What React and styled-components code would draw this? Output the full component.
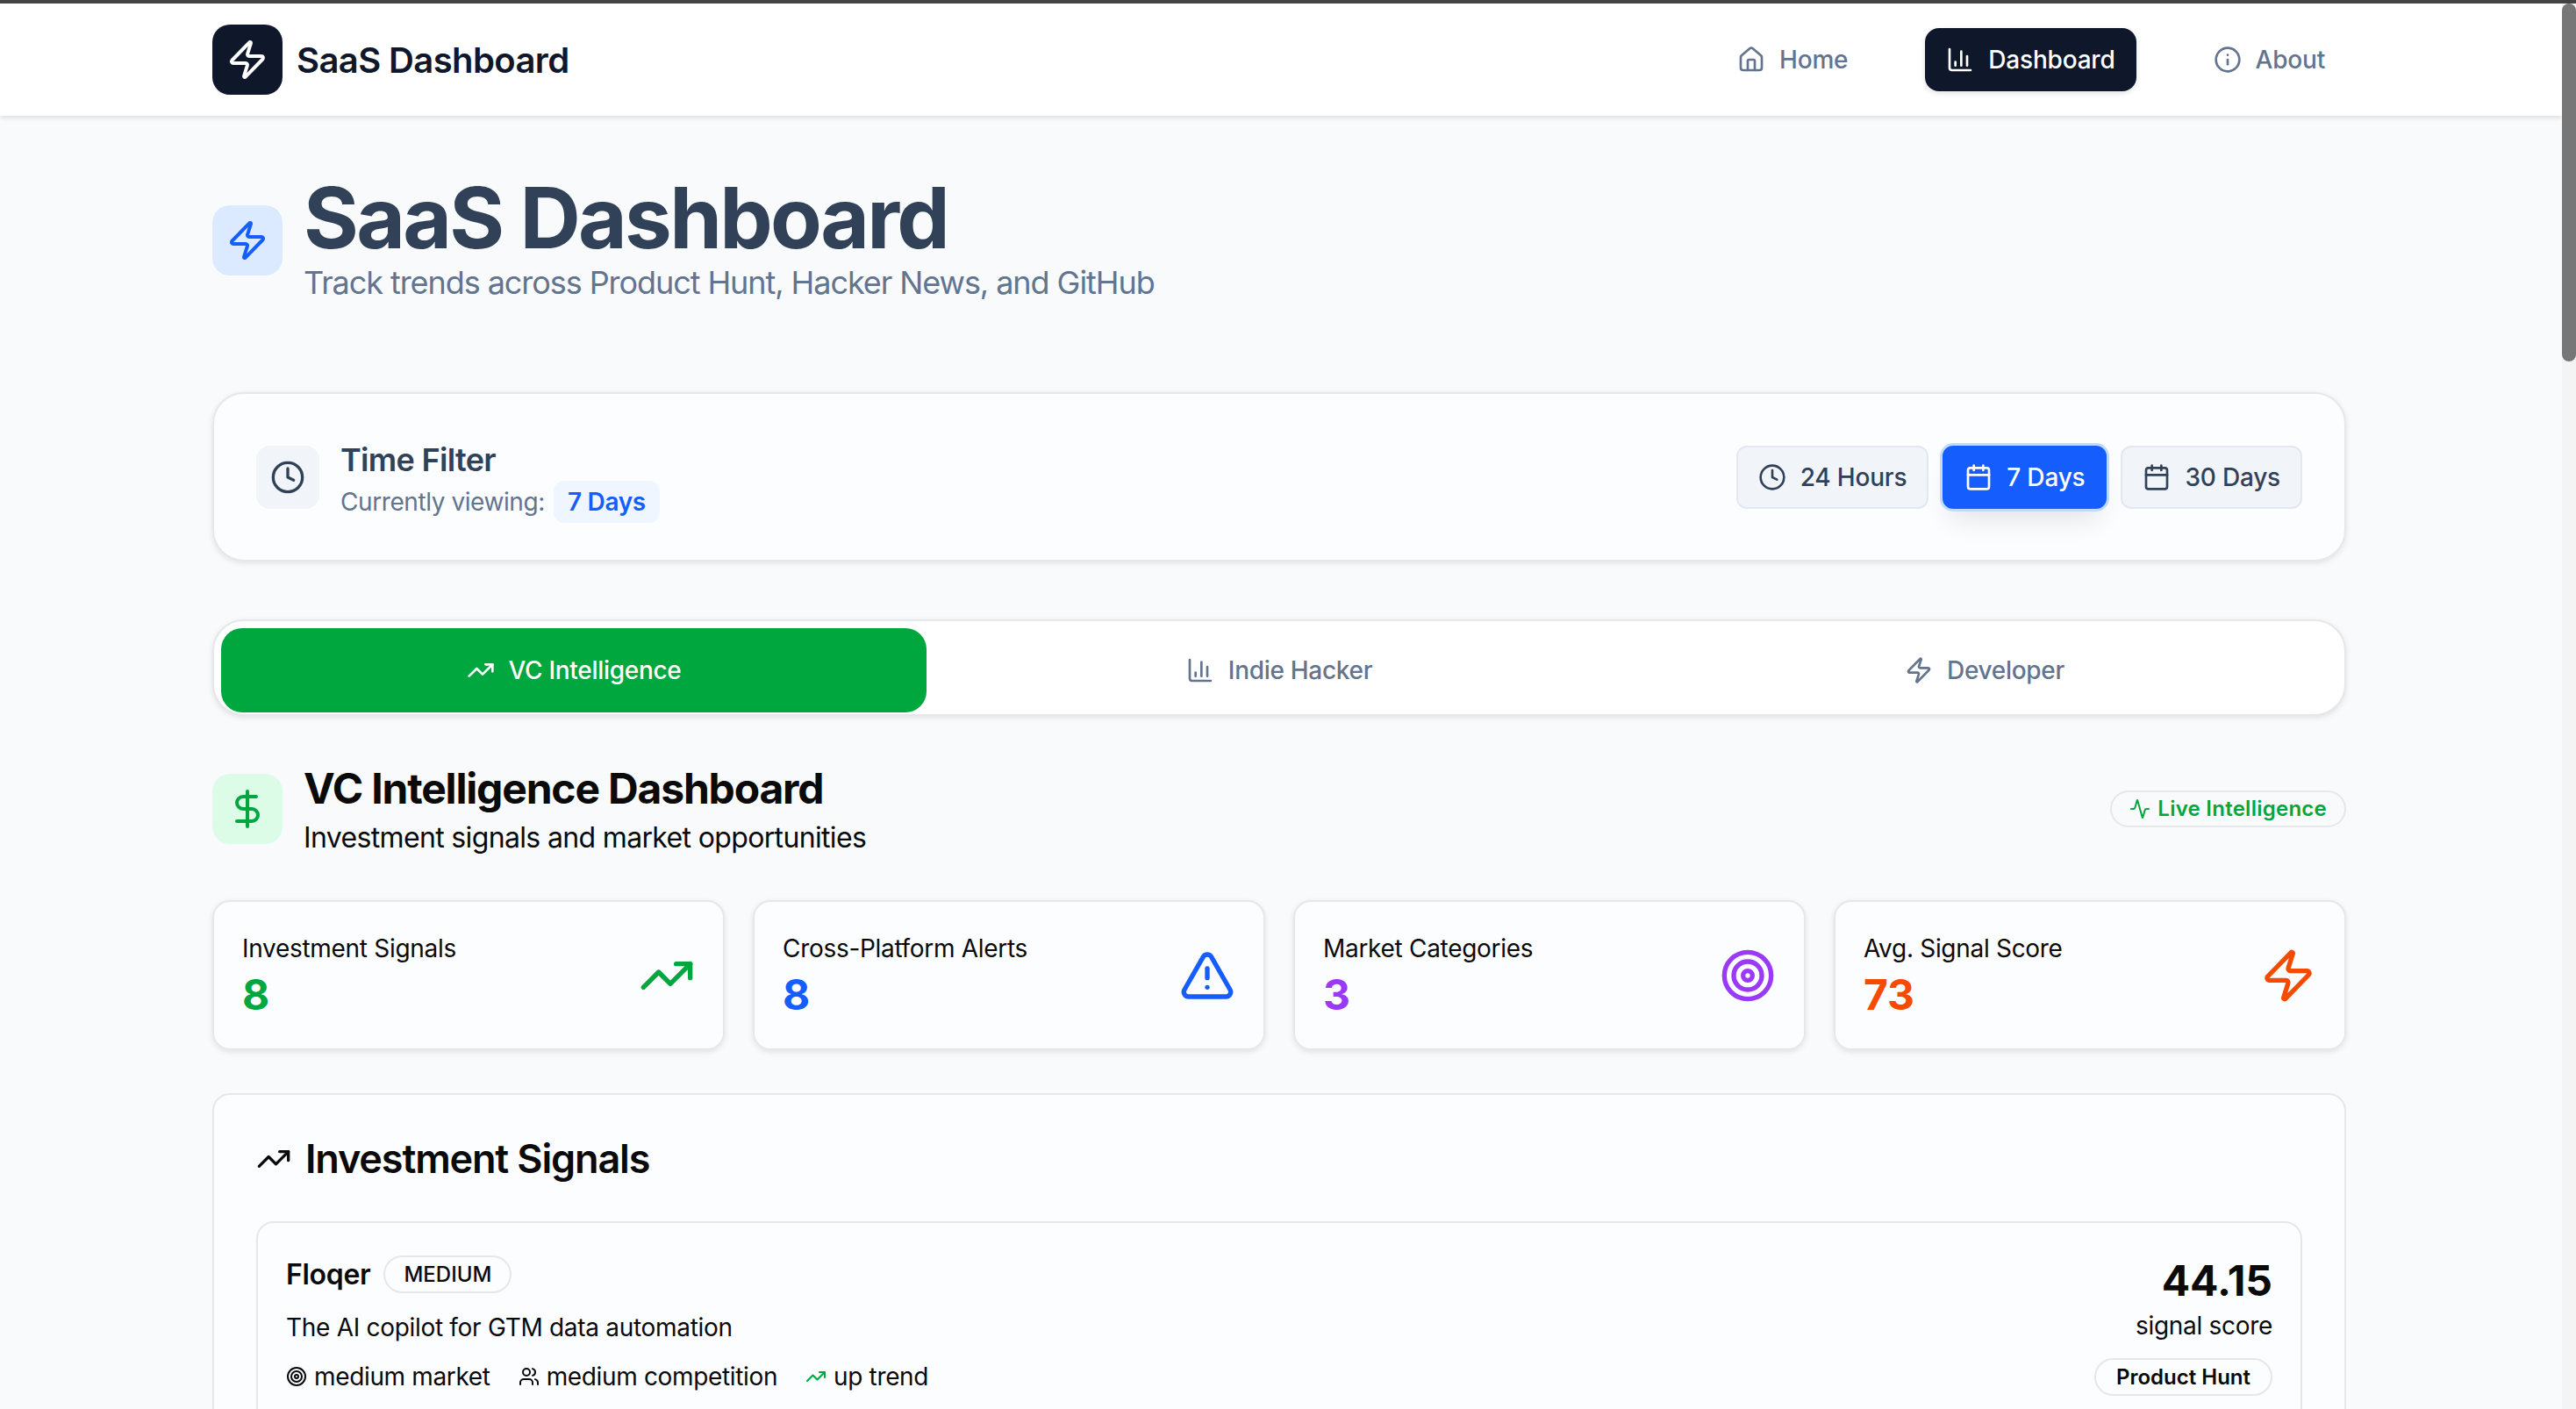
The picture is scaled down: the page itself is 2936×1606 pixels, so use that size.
import React from 'react'
import styled, { createGlobalStyle } from 'styled-components'
import {
  Zap, House, ChartColumn, Info, Clock, Calendar, TrendingUp, DollarSign,
  Activity, TriangleAlert, Target, Users,
} from 'lucide-react'

const Global = createGlobalStyle`
  html, body {
    margin: 0;
    height: 100%;
    overflow: hidden;
    background: #f8fafc;
  }
  * {
    box-sizing: border-box;
  }
  body {
    font-family: Inter, "Liberation Sans", sans-serif;
    color: #0a0a0a;
    letter-spacing: -0.3px;
  }
`

const Frame = styled.div`
  height: 1606px;
  display: flex;
  flex-direction: column;
  overflow: hidden;
`
const WindowEdge = styled.div`
  height: 4px;
  flex: none;
  background: #434343;
`
const Body = styled.div`
  flex: 1;
  display: flex;
  min-height: 0;
`
const Main = styled.div`
  flex: 1;
  min-width: 0;
  overflow: hidden;
`
const Track = styled.div`
  width: 16px;
  flex: none;
  background: #f4f4f5;
`
const Thumb = styled.div`
  height: 408px;
  background: #777777;
  border-radius: 8px;
`

const Header = styled.header`
  position: relative;
  z-index: 2;
  height: 128px;
  padding: 0 246px 0 242px;
  display: flex;
  align-items: center;
  justify-content: space-between;
  background: #fff;
  box-shadow: 0 2px 6px rgba(0, 0, 0, 0.12);
`
const Brand = styled.div`
  display: flex;
  align-items: center;
  gap: 16px;
  font-size: 40px;
  font-weight: 600;
  letter-spacing: -0.6px;
  color: #0f172b;
`
const LogoBox = styled.div`
  width: 80px;
  height: 80px;
  border-radius: 20px;
  display: flex;
  align-items: center;
  justify-content: center;
  background: ${p => p.$bg || '#0f172b'};
  color: ${p => p.$fg || '#fff'};
  flex: none;
`
const HeroIcon = styled(LogoBox)`
  margin-top: 6px;
`
const SectionIcon = styled(LogoBox)`
  margin-bottom: 7px;
`
const Nav = styled.nav`
  display: flex;
  gap: 64px;
`
const NavItem = styled.div`
  height: 72px;
  padding: 0 24px;
  display: flex;
  align-items: center;
  gap: 16px;
  border-radius: 16px;
  font-size: 28px;
  font-weight: 500;
  letter-spacing: -0.2px;
  color: ${p => (p.$active ? '#fff' : '#62748e')};
  background: ${p => (p.$active ? '#0f172b' : 'transparent')};
  box-shadow: ${p => (p.$active ? '0 2px 6px rgba(0,0,0,.12)' : 'none')};
`

const Content = styled.main`
  padding: 68px 246px 0 242px;
`
const Hero = styled.div`
  display: flex;
  align-items: center;
  gap: 24px;
  margin-bottom: 105px;
`
const HeroTitle = styled.h1`
  margin: 0;
  font-size: 96px;
  line-height: 96px;
  font-weight: 700;
  letter-spacing: -2.7px;
  color: #314158;
`
const HeroSub = styled.p`
  margin: 6px 0 0;
  font-size: 36px;
  line-height: 40px;
  letter-spacing: -1.07px;
  color: #62748e;
`

const FilterCard = styled.section`
  height: 193px;
  padding: 0 48px;
  display: flex;
  align-items: center;
  justify-content: space-between;
  background: rgba(255, 255, 255, 0.5);
  border: 2px solid #e5e7eb;
  border-radius: 36px;
  box-shadow: 0 2px 6px rgba(0, 0, 0, 0.1);
`
const FilterInfo = styled.div`
  display: flex;
  align-items: center;
  gap: 24px;
`
const ClockBox = styled.div`
  width: 72px;
  height: 72px;
  border-radius: 16px;
  display: flex;
  align-items: center;
  justify-content: center;
  background: #f1f5f9;
  color: #314158;
`
const FilterText = styled.div`
  margin-top: 13px;
`
const FilterTitle = styled.div`
  font-size: 36px;
  line-height: 40px;
  font-weight: 600;
  letter-spacing: -0.68px;
  color: #314158;
`
const FilterRow = styled.div`
  margin-top: 4px;
  display: flex;
  align-items: center;
  gap: 10px;
  font-size: 28px;
  letter-spacing: -0.42px;
  color: #62748e;
`
const CurrentChip = styled.span`
  height: 48px;
  padding: 0 16px;
  display: flex;
  align-items: center;
  border-radius: 12px;
  background: #eff6ff;
  color: #155dfc;
  font-weight: 600;
  letter-spacing: -0.3px;
`
const RangeGroup = styled.div`
  display: flex;
  gap: 16px;
`
const RangeButton = styled.div`
  height: 72px;
  padding: 0 23px;
  display: flex;
  align-items: center;
  gap: 16px;
  border-radius: 12px;
  font-size: 28px;
  font-weight: 500;
  letter-spacing: -0.2px;
  color: ${p => (p.$active ? '#fff' : '#314158')};
  background: ${p => (p.$active ? '#155dfc' : '#f1f5f9')};
  border: 2px solid ${p => (p.$active ? '#155dfc' : '#e2e8f0')};
  box-shadow: ${p => (p.$active
    ? '0 0 0 3px #bedbff, 0 20px 30px -8px rgba(0,0,0,.1)'
    : 'none')};
`

const Tabs = styled.div`
  margin-top: 66px;
  height: 110px;
  padding: 8px 8px 2px;
  display: grid;
  grid-template-columns: repeat(3, 1fr);
  background: #fff;
  border: 2px solid #e5e7eb;
  border-radius: 36px;
  box-shadow: 0 2px 6px rgba(0, 0, 0, 0.1);
`
const Tab = styled.div`
  height: 96px;
  display: flex;
  align-items: center;
  justify-content: center;
  gap: 16px;
  border-radius: 24px;
  font-size: 28px;
  font-weight: 500;
  color: ${p => (p.$active ? '#fff' : '#62748e')};
  background: ${p => (p.$active ? '#00a63e' : 'transparent')};
`

const SectionHead = styled.div`
  margin-top: 55px;
  display: flex;
  align-items: center;
  justify-content: space-between;
`
const SectionLeft = styled.div`
  display: flex;
  align-items: center;
  gap: 24px;
`
const SectionTitle = styled.h2`
  margin: 0;
  font-size: 48px;
  line-height: 56px;
  font-weight: 700;
  letter-spacing: -1.18px;
`
const SectionSub = styled.p`
  margin: 4px 0 0;
  font-size: 32px;
  line-height: 48px;
  letter-spacing: -0.65px;
`
const LiveBadge = styled.div`
  height: 42px;
  margin-bottom: 7px;
  padding: 0 20px;
  display: flex;
  align-items: center;
  gap: 8px;
  border: 2px solid #e5e7eb;
  border-radius: 21px;
  font-size: 24px;
  font-weight: 600;
  letter-spacing: 0.25px;
  color: #00a63e;
`

const StatGrid = styled.div`
  margin-top: 47px;
  display: grid;
  grid-template-columns: repeat(4, 1fr);
  gap: 32px;
`
const StatCard = styled.div`
  height: 171px;
  padding: 0 32px 5px;
  display: flex;
  align-items: center;
  justify-content: space-between;
  background: rgba(255, 255, 255, 0.5);
  border: 2px solid #e5e7eb;
  border-radius: 20px;
  box-shadow: 0 2px 6px rgba(0, 0, 0, 0.1);
  color: ${p => p.$tone};
  svg {
    margin-top: 5px;
  }
`
const StatLabel = styled.div`
  font-size: 28px;
  line-height: 40px;
  color: #0a0a0a;
`
const StatValue = styled.div`
  margin-top: 9px;
  font-size: 48px;
  line-height: 48px;
  font-weight: 700;
  letter-spacing: 0;
`

const Panel = styled.section`
  margin-top: 49px;
  padding: 47px 48px 48px;
  background: rgba(255, 255, 255, 0.5);
  border: 2px solid #e5e7eb;
  border-radius: 20px;
`
const PanelTitle = styled.h3`
  margin: 0 0 45px;
  display: flex;
  align-items: center;
  gap: 16px;
  font-size: 45px;
  line-height: 52px;
  font-weight: 600;
  letter-spacing: -1.15px;
`
const SignalCard = styled.article`
  padding: 32px;
  display: flex;
  justify-content: space-between;
  border: 2px solid #e5e7eb;
  border-radius: 20px;
`
const SignalName = styled.div`
  height: 52px;
  display: flex;
  align-items: center;
  gap: 15px;
  font-size: 32px;
  font-weight: 600;
`
const Pill = styled.span`
  height: 43px;
  padding: 0 21px;
  display: inline-flex;
  align-items: center;
  border: 2px solid #e5e7eb;
  border-radius: 22px;
  font-size: 24px;
  font-weight: 500;
  letter-spacing: 0;
`
const SourcePill = styled(Pill)`
  margin-top: 2px;
  padding: 0 23px;
  font-weight: 600;
`
const SignalDesc = styled.div`
  margin-top: 15px;
  font-size: 28px;
  line-height: 40px;
`
const MetaRow = styled.div`
  margin-top: 16px;
  display: flex;
  gap: 32px;
  font-size: 28px;
  line-height: 40px;
  letter-spacing: -0.35px;
`
const MetaItem = styled.span`
  display: flex;
  align-items: center;
  gap: 8px;
  svg {
    color: ${p => p.$tone || 'inherit'};
  }
`
const SignalRight = styled.div`
  display: flex;
  flex-direction: column;
  align-items: flex-end;
`
const Score = styled.div`
  font-size: 48px;
  line-height: 67px;
  font-weight: 700;
  letter-spacing: 0;
`
const ScoreLabel = styled.div`
  font-size: 28px;
  line-height: 40px;
  margin-top: -2px;
  margin-bottom: 15px;
`

const stats = [
  { label: 'Investment Signals', value: '8', tone: '#00a63e', Icon: TrendingUp },
  { label: 'Cross-Platform Alerts', value: '8', tone: '#155dfc', Icon: TriangleAlert },
  { label: 'Market Categories', value: '3', tone: '#9a3af8', Icon: Target },
  { label: 'Avg. Signal Score', value: '73', tone: '#f54a00', Icon: Zap },
]

const App = () => {
  return (
    <Frame>
      <Global />
      <WindowEdge />
      <Body>
        <Main>
          <Header>
            <Brand>
              <LogoBox><Zap size={48} /></LogoBox>
              SaaS Dashboard
            </Brand>
            <Nav>
              <NavItem><House size={32} />Home</NavItem>
              <NavItem $active><ChartColumn size={32} />Dashboard</NavItem>
              <NavItem><Info size={32} />About</NavItem>
            </Nav>
          </Header>
          <Content>
            <Hero>
              <HeroIcon $bg="#dbeafe" $fg="#155dfc"><Zap size={48} /></HeroIcon>
              <div>
                <HeroTitle>SaaS Dashboard</HeroTitle>
                <HeroSub>Track trends across Product Hunt, Hacker News, and GitHub</HeroSub>
              </div>
            </Hero>

            <FilterCard>
              <FilterInfo>
                <ClockBox><Clock size={40} /></ClockBox>
                <FilterText>
                  <FilterTitle>Time Filter</FilterTitle>
                  <FilterRow>
                    Currently viewing:
                    <CurrentChip>7 Days</CurrentChip>
                  </FilterRow>
                </FilterText>
              </FilterInfo>
              <RangeGroup>
                <RangeButton><Clock size={32} />24 Hours</RangeButton>
                <RangeButton $active><Calendar size={32} />7 Days</RangeButton>
                <RangeButton><Calendar size={32} />30 Days</RangeButton>
              </RangeGroup>
            </FilterCard>

            <Tabs>
              <Tab $active><TrendingUp size={32} />VC Intelligence</Tab>
              <Tab><ChartColumn size={32} />Indie Hacker</Tab>
              <Tab><Zap size={32} />Developer</Tab>
            </Tabs>

            <SectionHead>
              <SectionLeft>
                <SectionIcon $bg="#dcfce7" $fg="#00a63e"><DollarSign size={48} /></SectionIcon>
                <div>
                  <SectionTitle>VC Intelligence Dashboard</SectionTitle>
                  <SectionSub>Investment signals and market opportunities</SectionSub>
                </div>
              </SectionLeft>
              <LiveBadge><Activity size={24} />Live Intelligence</LiveBadge>
            </SectionHead>

            <StatGrid>
              {stats.map(({ label, value, tone, Icon }) => (
                <StatCard key={label} $tone={tone}>
                  <div>
                    <StatLabel>{label}</StatLabel>
                    <StatValue>{value}</StatValue>
                  </div>
                  <Icon size={64} />
                </StatCard>
              ))}
            </StatGrid>

            <Panel>
              <PanelTitle><TrendingUp size={40} />Investment Signals</PanelTitle>
              <SignalCard>
                <div>
                  <SignalName>Floqer <Pill>MEDIUM</Pill></SignalName>
                  <SignalDesc>The AI copilot for GTM data automation</SignalDesc>
                  <MetaRow>
                    <MetaItem><Target size={24} />medium market</MetaItem>
                    <MetaItem><Users size={24} />medium competition</MetaItem>
                    <MetaItem $tone="#00a63e"><TrendingUp size={24} />up trend</MetaItem>
                  </MetaRow>
                </div>
                <SignalRight>
                  <Score>44.15</Score>
                  <ScoreLabel>signal score</ScoreLabel>
                  <SourcePill>Product Hunt</SourcePill>
                </SignalRight>
              </SignalCard>
            </Panel>
          </Content>
        </Main>
        <Track><Thumb /></Track>
      </Body>
    </Frame>
  )
}

export default App
